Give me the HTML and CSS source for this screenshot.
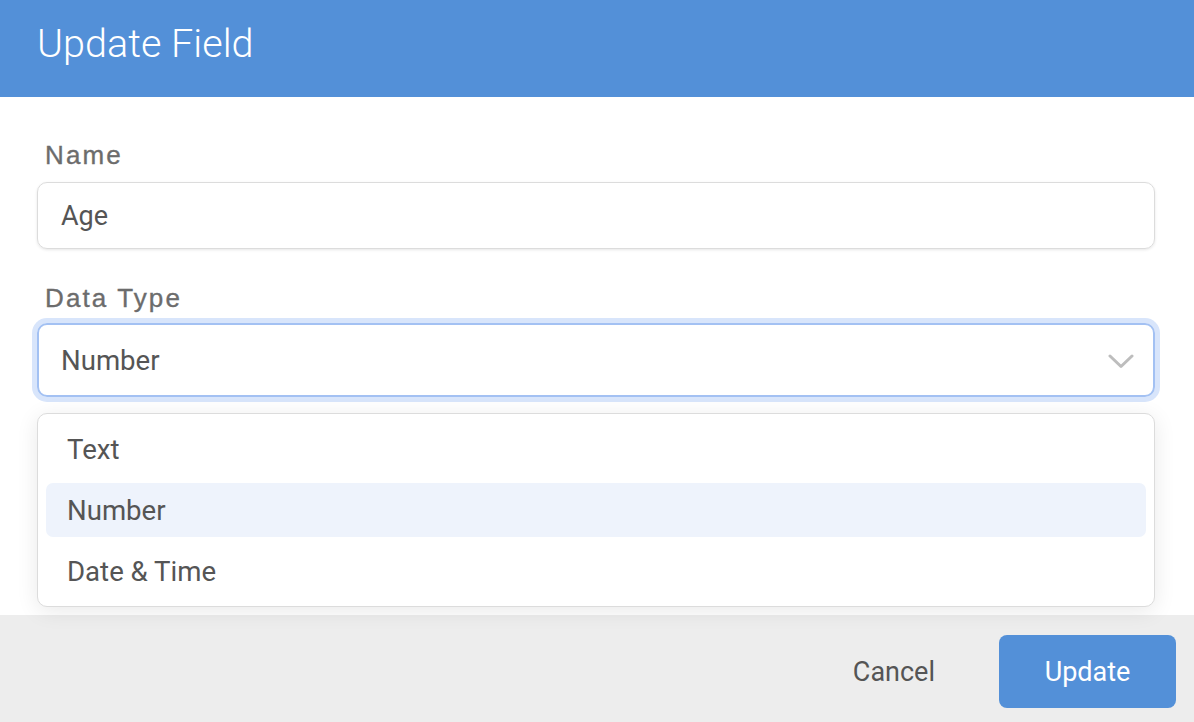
FILE: index.html
```html
<!DOCTYPE html>
<html>
<head>
<meta charset="utf-8">
<link rel="stylesheet" href="styles.css">
</head>
<body>
<div class="dialog">
  <header class="dialog-header">
    <h1 class="dialog-title">Update Field</h1>
  </header>
  <main class="dialog-body">
    <div class="field">
      <label class="field-label">Name</label>
      <div class="text-input">Age</div>
    </div>
    <div class="field field-select">
      <label class="field-label">Data Type</label>
      <div class="select-box">
        <span>Number</span>
        <svg class="chevron" width="26" height="15" viewBox="0 0 26 15"><path d="M2 2 L13 12.5 L24 2" fill="none" stroke="#bdbdbd" stroke-width="3" stroke-linecap="round" stroke-linejoin="round"/></svg>
      </div>
      <ul class="dropdown">
        <li class="option">Text</li>
        <li class="option option-active">Number</li>
        <li class="option">Date &amp; Time</li>
      </ul>
    </div>
  </main>
  <footer class="dialog-footer">
    <button class="btn btn-cancel">Cancel</button>
    <button class="btn btn-primary">Update</button>
  </footer>
</div>
</body>
</html>
```

FILE: styles.css
```css
* { box-sizing: border-box; }
html, body { margin: 0; padding: 0; }
body {
  width: 1194px;
  height: 722px;
  overflow: hidden;
  background: #fff;
  font-family: Roboto, "Liberation Sans", sans-serif;
}
.dialog {
  display: grid;
  grid-template-rows: 97px 1fr 107px;
  height: 722px;
}
.dialog-header {
  background: #5390d8;
  padding: 24px 37px 0;
}
.dialog-title {
  margin: 0;
  font-family: Roboto, sans-serif;
  font-weight: 300;
  font-size: 39.6px;
  line-height: 40px;
  color: #fff;
}
.dialog-body {
  padding: 43px 39px 0 37px;
}
.field { margin-bottom: 34px; }
.field-select { position: relative; }
.field-label {
  display: block;
  margin: 0 0 12px 8px;
  font-family: "Liberation Sans", Arial, sans-serif;
  font-size: 26px;
  line-height: 30px;
  letter-spacing: 2.1px;
  color: #6c6c6c;
  -webkit-text-stroke: 0.35px #6c6c6c;
}
.text-input {
  height: 67px;
  border: 1px solid #dcdcdc;
  border-radius: 10px;
  box-shadow: 0 1px 3px rgba(0,0,0,0.10);
  display: flex;
  align-items: center;
  padding: 0 23px;
  font-size: 27px;
  color: #555;
}
.select-box {
  height: 74px;
  margin-top: -2px;
  border: 2px solid #a3c1f3;
  border-radius: 10px;
  box-shadow: 0 0 0 5px #d8e5fb;
  display: flex;
  align-items: center;
  justify-content: space-between;
  padding: 0 19px 0 22px;
  font-size: 27.6px;
  color: #555;
}
.chevron { display: block; margin-top: 2px; }
.dropdown {
  position: absolute;
  left: 0;
  right: 0;
  top: 130px;
  margin: 0;
  list-style: none;
  padding: 8px 8px;
  background: #fff;
  border: 1px solid #dcdcdc;
  border-radius: 10px;
  box-shadow: 0 4px 22px rgba(0,0,0,0.09);
  display: flex;
  flex-direction: column;
  gap: 7px;
  z-index: 2;
}
.option {
  height: 54px;
  display: flex;
  align-items: center;
  padding-left: 21px;
  border-radius: 7px;
  font-size: 27.6px;
  color: #555;
}
.option-active { background: #eef3fc; }
.dialog-footer {
  background: #ededed;
  display: flex;
  justify-content: flex-end;
  align-items: center;
  padding: 6px 18px 0 0;
}
.btn {
  font-family: Roboto, sans-serif;
  font-size: 27px;
  border: none;
  cursor: pointer;
}
.btn-cancel {
  background: transparent;
  color: #555;
  padding: 0 32px;
  margin-right: 32px;
  height: 73px;
}
.btn-primary {
  width: 177px;
  height: 73px;
  border-radius: 8px;
  background: #5390d8;
  color: #fff;
}
```
